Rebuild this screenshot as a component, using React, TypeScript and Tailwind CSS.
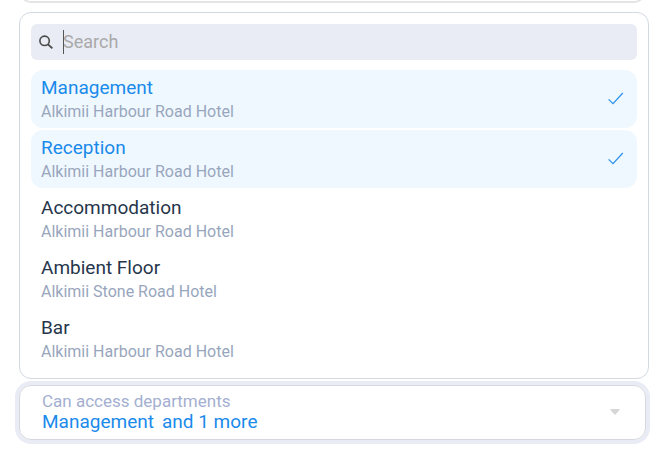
import { useState } from 'react'
import clsx from 'clsx'

type Department = { id: number; name: string; hotel: string }

const departments: Department[] = [
  { id: 1, name: 'Management', hotel: 'Alkimii Harbour Road Hotel' },
  { id: 2, name: 'Reception', hotel: 'Alkimii Harbour Road Hotel' },
  { id: 3, name: 'Accommodation', hotel: 'Alkimii Harbour Road Hotel' },
  { id: 4, name: 'Ambient Floor', hotel: 'Alkimii Stone Road Hotel' },
  { id: 5, name: 'Bar', hotel: 'Alkimii Harbour Road Hotel' },
]

function SearchIcon() {
  return (
    <svg viewBox="0 0 16 16" className="size-4 shrink-0" fill="none" stroke="#4a4a4a" strokeWidth="1.6" aria-hidden="true">
      <circle cx="5.6" cy="6.8" r="4.7" />
      <path d="M9 10.4 13.4 14.4" strokeWidth="1.9" />
    </svg>
  )
}

function CheckIcon() {
  return (
    <svg viewBox="0 0 16 16" className="size-4 shrink-0" fill="none" stroke="#2b93ee" strokeWidth="1.3" aria-hidden="true">
      <path d="M.6 9.4 5 13.6 14.8 3" />
    </svg>
  )
}

function SearchBox({ value, onChange }: { value: string; onChange: (value: string) => void }) {
  return (
    <div className="flex h-9 items-center gap-2 rounded-md bg-[#e9ecf4] px-2">
      <SearchIcon />
      <div className="relative flex-1">
        <input
          type="text"
          aria-label="Search"
          placeholder="Search"
          value={value}
          onChange={(e) => onChange(e.target.value)}
          className="block h-6 w-full bg-transparent text-lg leading-6 text-[#27364b] caret-transparent outline-none placeholder:text-[#a9a9a9]"
        />
        {!value && <span className="absolute inset-y-0 left-0 w-px bg-[#555]" />}
      </div>
    </div>
  )
}

type OptionProps = { department: Department; selected: boolean; onToggle: () => void }

function Option({ department, selected, onToggle }: OptionProps) {
  return (
    <button
      type="button"
      role="option"
      aria-selected={selected}
      onClick={onToggle}
      className={clsx(
        'flex w-full items-center justify-between rounded-xl pt-1 pr-[13px] pb-1.5 pl-2.5 text-left',
        selected && 'bg-[#f0f8ff]',
      )}
    >
      <span className="flex flex-col">
        <span className={clsx('text-[19px] leading-7', selected ? 'text-[#1a8aeb]' : 'text-[#27364b]')}>
          {department.name}
        </span>
        <span className="text-base leading-5 text-[#98a6bd]">{department.hotel}</span>
      </span>
      {selected && <CheckIcon />}
    </button>
  )
}

export default function App() {
  const [query, setQuery] = useState('')
  const [selected, setSelected] = useState([1, 2])

  const toggle = (id: number) =>
    setSelected((ids) => (ids.includes(id) ? ids.filter((i) => i !== id) : [...ids, id]))

  const visible = departments.filter((d) => d.name.toLowerCase().includes(query.toLowerCase()))
  const chosen = departments.filter((d) => selected.includes(d.id))

  return (
    <main className="min-h-screen bg-white pr-[21px] pl-[19px] font-[Roboto,sans-serif]">
      {/* bottom edge of the previous field */}
      <div className="mr-[3px] h-[3px] overflow-hidden">
        <div className="-mt-8 h-[35px] rounded-xl border-2 border-[#e3e4e6]" />
      </div>

      {/* dropdown */}
      <div className="mt-[9px] rounded-xl border border-[#d3d9e3] px-[11px] pt-[11px] pb-2.5">
        <SearchBox value={query} onChange={setQuery} />
        <div role="listbox" aria-label="Departments" aria-multiselectable="true" className="mt-2.5 flex flex-col gap-0.5">
          {visible.map((d) => (
            <Option
              key={d.id}
              department={d}
              selected={selected.includes(d.id)}
              onToggle={() => toggle(d.id)}
            />
          ))}
        </div>
      </div>

      {/* field */}
      <div className="mt-1.5 mr-[3px]">
        <button
          type="button"
          aria-haspopup="listbox"
          aria-expanded="true"
          className="flex w-full items-center justify-between rounded-xl border border-[#d5d8de] pt-[5px] pr-[25px] pb-1.5 pl-[22px] text-left ring-4 ring-[#e9ecf4]"
        >
          <span className="flex flex-col">
            <span className="text-[17px] leading-5 text-[#a3afd0]">Can access departments</span>
            <span className="flex gap-2 text-[19px] leading-[22px] text-[#1a8aeb]">
              <span>{chosen[0]?.name}</span>
              {chosen.length > 1 && <span>and {chosen.length - 1} more</span>}
            </span>
          </span>
          <svg viewBox="0 0 10 6" className="h-1.5 w-2.5" fill="#d6d6d6" aria-hidden="true">
            <path d="M.8 0h8.4q.8.2.3.9L5.5 5.6q-.5.5-1 0L.5.9Q0 .2.8 0Z" />
          </svg>
        </button>
      </div>
    </main>
  )
}
